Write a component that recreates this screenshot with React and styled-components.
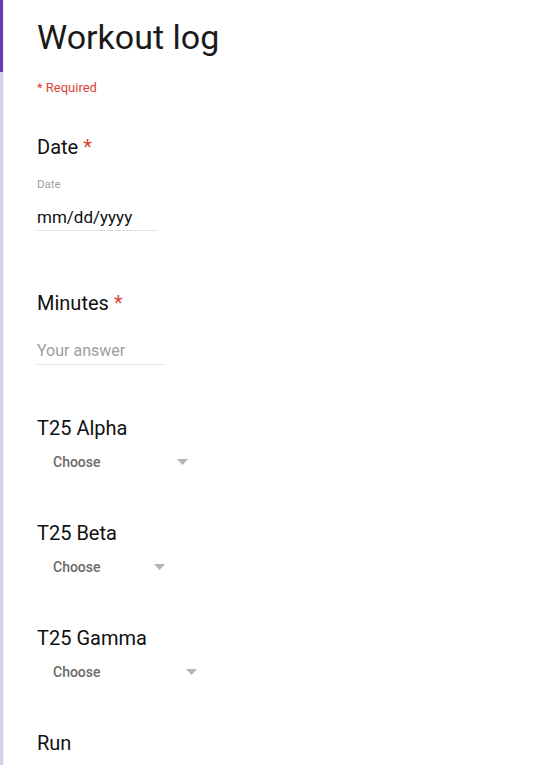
import React from "react"
import styled, { createGlobalStyle } from "styled-components";

const questions = [
  { title: "Date", required: true, kind: "date", space: 60 },
  { title: "Minutes", required: true, kind: "text", space: 51 },
  { title: "T25 Alpha", kind: "select", width: 159, space: 49 },
  { title: "T25 Beta", kind: "select", width: 136, space: 49 },
  { title: "T25 Gamma", kind: "select", width: 168, space: 49 },
  { title: "Run", kind: "none", space: 0 },
];

const Arrow = () => (
  <svg width="11" height="6" viewBox="0 0 11 6">
    <path d="M0 0 L11 0 L5.5 6 Z" fill="#b4b4b4" />
  </svg>
);

const Control = ({ q }) => {
  if (q.kind === "date") {
    return (
      <>
        <SmallLabel>Date</SmallLabel>
        <DateField>mm/dd/yyyy</DateField>
      </>
    );
  }
  if (q.kind === "text") {
    return <TextField>Your answer</TextField>;
  }
  if (q.kind === "select") {
    return (
      <Dropdown width={q.width}>
        <span>Choose</span>
        <Arrow />
      </Dropdown>
    );
  }
  return null;
};

const App = () => (
  <Page>
    <GlobalStyles />
    <Rail>
      <Accent />
      <Track />
    </Rail>

    <Form>
      <Title>Workout log</Title>
      <RequiredNote>* Required</RequiredNote>

      {questions.map((q) => (
        <Question key={q.title} space={q.space}>
          <QuestionTitle>
            {q.title}
            {q.required && <Star>*</Star>}
          </QuestionTitle>
          <Control q={q} />
        </Question>
      ))}
    </Form>
  </Page>
)

const GlobalStyles = createGlobalStyle`
  html {
    box-sizing: border-box;
  }

  body {
    margin: 0;
    background: #fff;
    overflow: hidden;
  }

  *, *::after, *::before {
    box-sizing: inherit;
  }
`;

const Page = styled.div`
  display: flex;
  height: 765px;
  overflow: hidden;
  font-family: Roboto, "Liberation Sans", sans-serif;
  -webkit-font-smoothing: antialiased;
`;

const Rail = styled.div`
  display: flex;
  flex-direction: column;
  width: 4px;
  flex-shrink: 0;
  border-right: 1px solid #f1f1f1;
`;

const Accent = styled.div`
  height: 72px;
  background: #673ab7;
`;

const Track = styled.div`
  flex-grow: 1;
  background: #d7cfe9;
`;

const Form = styled.main`
  display: flex;
  flex-direction: column;
  align-items: flex-start;
  padding: 17px 0 0 33px;
`;

const Title = styled.h1`
  margin: 0;
  font-size: 34px;
  line-height: 40px;
  font-weight: 400;
  color: #1a1a1a;
`;

const RequiredNote = styled.div`
  margin: 23px 0 39px;
  font-size: 13px;
  line-height: 16px;
  color: #db4437;
`;

const Question = styled.section`
  display: flex;
  flex-direction: column;
  align-items: flex-start;
  margin-bottom: ${(p) => p.space}px;
`;

const QuestionTitle = styled.h2`
  margin: 0;
  font-size: 20px;
  line-height: 24px;
  font-weight: 400;
  color: #111;
`;

const Star = styled.span`
  margin-left: 5px;
  color: #db4437;
`;

const SmallLabel = styled.div`
  margin-top: 17px;
  font-size: 11.5px;
  line-height: 16px;
  color: #9e9e9e;
`;

const DateField = styled.div`
  margin-top: 14px;
  width: 120px;
  padding-bottom: 2px;
  font-size: 17px;
  line-height: 22px;
  color: #111;
  border-bottom: 1px solid #e0e0e0;
`;

const TextField = styled.div`
  margin-top: 26px;
  width: 128px;
  padding-bottom: 3px;
  font-size: 16px;
  line-height: 20px;
  color: #9e9e9e;
  border-bottom: 1px solid #e0e0e0;
`;

const Dropdown = styled.div`
  display: flex;
  align-items: center;
  justify-content: space-between;
  width: ${(p) => p.width}px;
  margin-top: 12px;
  padding: 0 8px 0 16px;
  font-size: 14px;
  line-height: 20px;
  font-weight: 500;
  color: #6b6b6b;
`;

export default App
